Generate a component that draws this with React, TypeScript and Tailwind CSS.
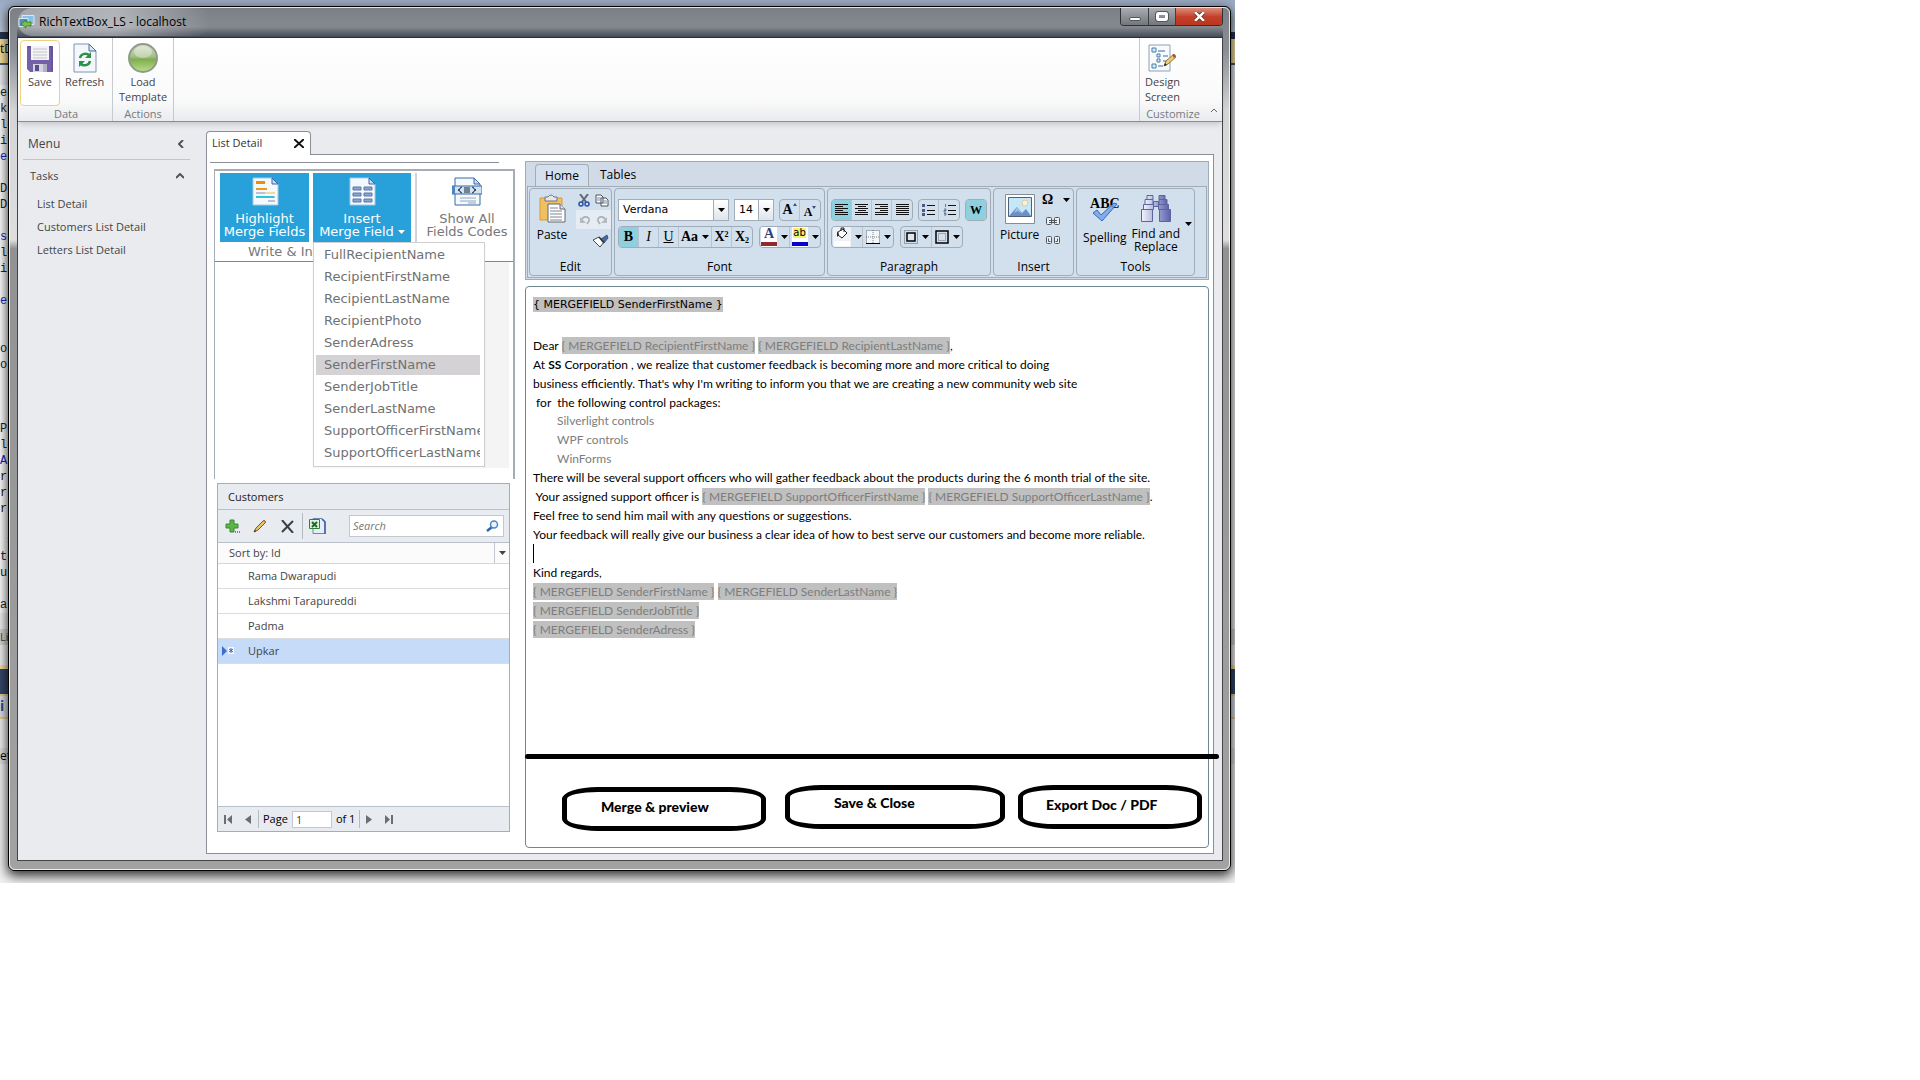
import type { ReactNode } from "react";
import clsx from "clsx";

const CODE_LINES = [
  "ea", "k", "lo", "in", "er", "", "De", "De", "", "s", "lo", "in", "", "er", "", "", "or", "or",
  "", "", "", "Po", "lo", "As", "r", "r", "r", "", " =", "te", "us", "", "ag",
];
const KEYWORD_LINES = [4, 9, 13, 23];

const TASKS = ["List Detail", "Customers List Detail", "Letters List Detail"];

const MERGE_FIELDS = [
  "FullRecipientName",
  "RecipientFirstName",
  "RecipientLastName",
  "RecipientPhoto",
  "SenderAdress",
  "SenderFirstName",
  "SenderJobTitle",
  "SenderLastName",
  "SupportOfficerFirstName",
  "SupportOfficerLastName",
];

const CUSTOMERS = ["Rama Dwarapudi", "Lakshmi Tarapureddi", "Padma", "Upkar"];

const Caret = ({ className = "" }: { className?: string }) => (
  <svg width="7" height="4" viewBox="0 0 7 4" className={clsx("shrink-0", className)}>
    <path d="M0 0h7L3.5 4z" fill="currentColor" />
  </svg>
);

const SaveIcon = () => (
  <svg width="26" height="27" viewBox="0 0 26 27">
    <path d="M0 1h26v26H3l-3-3z" fill="#7261a8" />
    <path d="M1 2h24v24" fill="none" stroke="#5a4a92" />
    <path d="M4 1h18v14H4z" fill="#f4f4f6" />
    <path d="M6 4h14M6 7h14M6 10h14M6 13h14" stroke="#c3c3cb" />
    <path d="M6 19h14v8H6z" fill="#d5d5de" />
    <path d="M8 20h4v6H8z" fill="#5b4c8e" />
    <path d="M16 19h4v8h-4z" fill="#b1b0c4" />
  </svg>
);

const RefreshIcon = () => (
  <svg width="24" height="30" viewBox="0 0 24 30">
    <path d="M1 1h15l7 7v21H1z" fill="#f3f7fc" stroke="#7f95b2" />
    <path d="M16 1v7h7z" fill="#d8e5f5" stroke="#4f6c9c" />
    <path d="M7 15c1-5 7-5 9-3M17 18c-1 5-7 5-9 3" fill="none" stroke="#2c9148" strokeWidth="2.500" />
    <path d="M18 9v6h-6zM6 24v-6h6z" fill="#2c9148" />
  </svg>
);

const GreenBall = () => (
  <svg width="32" height="32" viewBox="0 0 32 32">
    <defs>
      <linearGradient id="ball" x1="0" y1="0" x2="0" y2="1">
        <stop offset="0" stopColor="#d5e0cc" />
        <stop offset="0.45" stopColor="#a3bf86" />
        <stop offset="0.55" stopColor="#7fae50" />
        <stop offset="1" stopColor="#b8e08c" />
      </linearGradient>
    </defs>
    <circle cx="16" cy="16" r="14" fill="url(#ball)" stroke="#8f9b88" strokeWidth="2" />
    <ellipse cx="16" cy="10" rx="9" ry="6" fill="#ffffff" opacity="0.35" />
  </svg>
);

const DesignIcon = () => (
  <svg width="28" height="28" viewBox="0 0 28 28">
    <path d="M1 1h21v26H1z" fill="#f8fafc" stroke="#8fa0b8" />
    <path d="M4 4h4v4H4zM9 10h3v3H9zM9 15h3v3H9zM4 20h4v4H4z" fill="#d9ecf5" stroke="#477fae" />
    <path d="M10 7h7M15 12h5M15 17h3M10 22h5" stroke="#3c6aa5" />
    <path d="M16 22l2-5 8-7 2 3-8 7z" fill="#e8cf6c" stroke="#6c5c30" strokeWidth="0.8" />
    <path d="M24 11l2-1 2 2-2 2z" fill="#b84c3b" />
    <path d="M16 22l1-3 2 2z" fill="#222" />
  </svg>
);

const PageIcon = ({ kind }: { kind: "highlight" | "insert" | "codes" }) => (
  <svg width="30" height="29" viewBox="0 0 30 29">
    <path d="M3 1h19l6 6v21H3z" fill="#f4f9fd" stroke={kind === "codes" ? "#3d68a5" : "#a9c8e2"} />
    <path d="M22 1v6h6z" fill="#c9dcf0" stroke="#3d68a5" />
    {kind === "highlight" && (
      <>
        <path d="M6 4h9v3H6z" fill="#ed8b12" />
        <path d="M6 12h11" stroke="#ed9a1c" strokeWidth="2" />
        <path d="M6 16h9M16 20h9" stroke="#7d8db4" />
        <path d="M15 16h10" stroke="#f2b44c" />
        <path d="M6 20h18" stroke="#32c3dc" strokeWidth="2" />
        <path d="M18 24h7" stroke="#7d8db4" />
      </>
    )}
    {kind === "insert" && (
      <path
        d="M6 10h8v3H6zM17 10h8v3h-8zM6 16h8v3H6zM17 16h8v3h-8zM6 22h8v3H6zM17 22h8v3h-8z"
        fill="#8ea5cb"
        stroke="#5878aa"
      />
    )}
    {kind === "codes" && (
      <>
        <path d="M0 9h30v8H0z" fill="#cfe3f5" stroke="#3d68a5" />
        <path d="M0 9h3v8H0z" fill="#4c86c6" />
        <path d="M10 10q-2 0-2 2l-2 1 2 1q0 2 2 2M20 10q2 0 2 2l2 1-2 1q0 2-2 2M12 11h6M12 13h6M12 15h6" fill="none" stroke="#18202c" />
        <path d="M8 21h16M8 24h16M16 26h8" stroke="#93a8c8" />
      </>
    )}
  </svg>
);

const PasteIcon = () => (
  <svg width="27" height="29" viewBox="0 0 27 29">
    <path d="M1 4h22v22H1z" fill="#f0bf62" stroke="#d79b3c" />
    <path d="M6 3h3q3-4 6 0h3v4H6z" fill="#e5e7ea" stroke="#6f757d" />
    <path d="M9 10h12l5 5v13H9z" fill="#fff" stroke="#60666f" />
    <path d="M21 10v5h5" fill="#dde4ec" stroke="#60666f" />
    <path d="M11 14h8M11 17h12M11 20h12M11 23h12M11 26h12" stroke="#7e858e" />
  </svg>
);

const CutIcon = () => (
  <svg width="12" height="13" viewBox="0 0 12 13" fill="none">
    <path d="M2 0l6 8M10 0L4 8" stroke="#5f6670" strokeWidth="2" />
    <circle cx="3" cy="10" r="2" stroke="#2a51a8" strokeWidth="1.5" />
    <circle cx="9" cy="10" r="2" stroke="#2a51a8" strokeWidth="1.5" />
  </svg>
);

const CopyIcon = () => (
  <svg width="14" height="13" viewBox="0 0 14 13">
    <path d="M1 1h5l2 2v6H1zM6 4h5l2 2v6H6z" fill="#fff" stroke="#4d5560" />
    <path d="M2 4h4M2 6h4M8 7h4M8 9h4" stroke="#7b8ba5" />
  </svg>
);

const UndoIcon = ({ flip = false }: { flip?: boolean }) => (
  <svg width="12" height="10" viewBox="0 0 12 10" className={clsx(flip && "-scale-x-100")}>
    <path d="M2 6c2-6 9-5 8 0l-2 3" fill="none" stroke="#a9afb7" strokeWidth="1.6" />
    <path d="M1 2v6h6z" fill="#b5bac1" />
  </svg>
);

const BrushIcon = () => (
  <svg width="17" height="14" viewBox="0 0 17 14">
    <path d="M9 5l6-4 1 3-4 5z" fill="#4c66a0" stroke="#2f4270" strokeWidth="0.8" />
    <path d="M1 6l6-3 5 5-4 5z" fill="#fff" stroke="#444b55" />
    <path d="M7 3l5 6" stroke="#333" strokeWidth="1.5" />
  </svg>
);

const AlignIcon = ({ kind }: { kind: "left" | "center" | "right" | "justify" }) => {
  const short = { left: "M0 3h8M0 7h8", center: "M3 3h8M3 7h8", right: "M5 3h8M5 7h8", justify: "M0 3h13M0 7h13" };
  return (
    <svg width="13" height="12" viewBox="0 0 13 12" stroke="#111" fill="none">
      <path d="M0 1h13M0 5h13M0 9h13M0 11h13" transform="translate(0 -.5)" />
      <path d={short[kind]} transform="translate(0 -.5)" />
    </svg>
  );
};

const ListIcon = ({ numbered = false }: { numbered?: boolean }) => (
  <svg width="13" height="12" viewBox="0 0 13 12">
    <path d="M5 1.5h8M5 6.500h8M5 10.500h8" stroke="#111" />
    {numbered ? (
      <path d="M2.500 0v3M1 5h2v1.500H1V8h2M1 9.500h2V11H1" fill="none" stroke="#4a5d80" strokeWidth="0.8" />
    ) : (
      <path d="M0 0h3v3H0zM0 5h3v3H0zM0 9h3v3H0z" fill="#4a5d80" />
    )}
  </svg>
);

const BucketIcon = () => (
  <svg width="18" height="20" viewBox="0 0 18 20">
    <path d="M0 0h18v20H0z" fill="#eef2f7" />
    <path d="M5 5l5-3 4 4-5 5-4-3z" fill="#fff" stroke="#222" />
    <path d="M8 4V1h3v4" fill="none" stroke="#222" />
    <path d="M4 4v6l2-2z" fill="#222" />
    <path d="M1 14h16v5H1z" fill="#fff" />
  </svg>
);

const BorderIcon = ({ kind }: { kind: "bottom" | "inner" | "outer" }) => (
  <svg width="14" height="14" viewBox="0 0 14 14" fill="none">
    {kind === "bottom" && (
      <>
        <path d="M0 0h14v14H0z" fill="#f4f7fa" />
        <path d="M7 0v13M0 7h13" stroke="#7b848f" strokeDasharray="1 1" />
      </>
    )}
    {kind !== "outer" && <path d="M.5.5h13v13H.5z" stroke="#56606c" strokeDasharray="1 1" />}
    {kind === "bottom" && <path d="M0 13.500h14" stroke="#000" />}
    {kind === "inner" && <path d="M3 3h8v8H3z" fill="#dfe6ee" stroke="#000" strokeWidth="1.500" />}
    {kind === "outer" && (
      <>
        <path d="M1 1h12v12H1z" stroke="#000" strokeWidth="1.500" />
        <path d="M3.500 3.500h7v7h-7z" stroke="#68717d" strokeDasharray="1 1" />
      </>
    )}
  </svg>
);

const PictureIcon = () => (
  <svg width="30" height="30" viewBox="0 0 30 30">
    <path d="M.5.5h29v29H.5z" fill="#fff" stroke="#868d96" />
    <path d="M3.500 3.500h23v19h-23z" fill="#c5e8f8" stroke="#4f5f74" />
    <circle cx="20" cy="9" r="3" fill="#fdf0d0" stroke="#e9c79b" />
    <path d="M4 22l8-9 5 6 4-4 5 7z" fill="#6a8fc9" />
    <path d="M12 13l-3 6 4-2 4 3z" fill="#a5c0e6" />
  </svg>
);

const LinkIcon = ({ broken = false }: { broken?: boolean }) => (
  <svg width="14" height="8" viewBox="0 0 14 8" fill="none" stroke="#4f565f">
    <rect x="0.500" y="0.500" width="5" height="7" rx="1" fill="#eef1f4" />
    <rect x="8.500" y="0.500" width="5" height="7" rx="1" fill="#eef1f4" />
    {broken ? <path d="M2.500 2.500v3h2M11.500 2.500v3h-2" /> : <path d="M3 3.500h8M3 5.500h8" />}
  </svg>
);

const SpellingIcon = () => (
  <span className="flex flex-col items-center">
    <span className="font-['Liberation_Serif'] text-sm leading-3 font-bold">ABC</span>
    <svg width="28" height="20" viewBox="0 0 28 20" className="-mt-2">
      <path d="M2 11l4-3 4 5L23 1l3 1-15 17z" fill="#76a5ea" fillOpacity="0.85" stroke="#3767bd" />
    </svg>
  </span>
);

const BinocularsIcon = () => (
  <svg width="30" height="27" viewBox="0 0 30 27">
    <defs>
      <linearGradient id="lens" x1="0" x2="1">
        <stop offset="0" stopColor="#f2f4fc" />
        <stop offset="1" stopColor="#5a62ae" />
      </linearGradient>
    </defs>
    <g fill="url(#lens)" stroke="#5d649f">
      <path d="M6 .5h6v4H6zM18 .5h6v4h-6zM4 4.500h8v5H4zM18 4.500h8v5h-8z" />
      <path d="M2.500 9.500h10v5h-10zM17.500 9.500h10v5h-10zM12.500 6.500h5v5h-5z" />
      <path d="M.5 14.500h11v12H.5zM18.500 14.500h11v12h-11z" />
    </g>
  </svg>
);

const TitleBar = () => (
  <header className="flex h-[29px] items-start justify-between bg-linear-to-b from-[#7b8087] from-0% via-[#85898f] via-65% to-[#454c58] pl-px">
    <h1 className="flex h-7 items-center gap-1 rounded-full bg-linear-to-r from-white/30 via-white/40 to-transparent pr-6 font-['Open_Sans'] text-xs text-black">
      <svg width="17" height="14" viewBox="0 0 17 14">
        <path d="M4 .5h12v9H4z" fill="#84c2ea" stroke="#dfe6ee" />
        <path d="M1 3.500h9v8H1z" fill="#4e8fc8" stroke="#dfe6ee" />
        <path d="M13 11H8v2L3 9l5-4v2h5z" fill="#7ac143" stroke="#2c7a22" strokeWidth="0.800" />
      </svg>
      RichTextBox_LS - localhost
    </h1>
    <div className="flex h-[18px] overflow-hidden rounded-b border border-t-0 border-[#2d3238] text-white">
      <button aria-label="Minimize" className="flex w-[28px] items-end justify-center border-r border-[#3c4147] bg-linear-to-b from-[#a9adb2] to-[#73777d] pb-1">
        <span className="h-1 w-3 rounded-xs border border-[#555] bg-white" />
      </button>
      <button aria-label="Maximize" className="flex w-[27px] items-center justify-center border-r border-[#3c4147] bg-linear-to-b from-[#a9adb2] to-[#73777d]">
        <span className="h-[9px] w-3 rounded-xs border-3 border-white outline outline-[#555]" />
      </button>
      <button aria-label="Close" className="flex w-[46px] items-center justify-center bg-linear-to-b from-[#d98d7c] via-[#c4402a] to-[#b8351f]">
        <svg width="11" height="9" viewBox="0 0 11 9">
          <path d="M1 0l9 9M10 0L1 9" stroke="#5c1d12" strokeWidth="4" />
          <path d="M1 0l9 9M10 0L1 9" stroke="#fff" strokeWidth="2.500" />
        </svg>
      </button>
    </div>
  </header>
);

const AppButton = ({ icon, label, active = false }: { icon: ReactNode; label: string; active?: boolean }) => (
  <button
    className={clsx(
      "flex h-[66px] flex-col items-center rounded-sm border px-1 pt-px text-[11px] leading-[15px] text-[#444]",
      active ? "w-10 border-[#ecd27c] bg-white" : "border-transparent",
    )}
  >
    <span className="flex h-8 items-center">{icon}</span>
    <span className="w-min">{label}</span>
  </button>
);

const AppGroup = ({ title, children, className }: { title: string; children: ReactNode; className?: string }) => (
  <div className={clsx("flex flex-col pt-[2px]", className)}>
    <div className="flex">{children}</div>
    <div className="text-center text-[11px] leading-4 text-[#77797d]">{title}</div>
  </div>
);

const AppRibbon = () => (
  <div className="flex h-[84px] justify-between border-b border-[#8b8e93] bg-linear-to-b from-white from-0% via-[#fafafa] via-75% to-[#e9ebef] shadow-md">
    <div className="flex">
      <AppGroup title="Data" className="w-[95px] border-r border-[#c6c9ce] pl-[2px]">
        <AppButton icon={<SaveIcon />} label="Save" active />
        <AppButton icon={<RefreshIcon />} label="Refresh" />
      </AppGroup>
      <AppGroup title="Actions" className="w-[61px] items-center border-r border-[#c6c9ce]">
        <AppButton icon={<GreenBall />} label="Load Template" />
      </AppGroup>
    </div>
    <div className="flex w-[83px] items-end justify-between border-l border-[#c6c9ce] pr-1">
      <AppGroup title="Customize" className="h-full w-[66px]">
        <AppButton icon={<DesignIcon />} label="Design Screen" />
      </AppGroup>
      <button aria-label="Collapse ribbon" className="mb-2">
        <svg width="8" height="5" viewBox="0 0 8 5" fill="none" stroke="#666">
          <path d="M1 4l3-3 3 3" />
        </svg>
      </button>
    </div>
  </div>
);

const Sidebar = () => (
  <nav className="w-[188px] shrink-0 pt-[6px] text-[#444]">
    <div className="mr-4 ml-[5px] flex h-8 items-center justify-between border-b border-[#bcc6d4] pr-[6px] pl-[5px] text-xs">
      Menu
      <svg width="6" height="8" viewBox="0 0 6 8" fill="none" stroke="#555" strokeWidth="2">
        <path d="M5 0L1 4l4 4" />
      </svg>
    </div>
    <div className="mr-4 ml-[12px] flex h-8 items-center justify-between pr-[6px] text-[11px]">
      Tasks
      <svg width="8" height="6" viewBox="0 0 8 6" fill="none" stroke="#555" strokeWidth="2">
        <path d="M0 5l4-4 4 4" />
      </svg>
    </div>
    <ul className="pl-[19px] text-[11px]">
      {TASKS.map((task) => (
        <li key={task} className="h-[23px] leading-[23px]">
          <a href="#">{task}</a>
        </li>
      ))}
    </ul>
  </nav>
);

const MergePanel = () => (
  <section className="flex h-[310px] flex-col border-t-2 border-r-2 border-l border-[#a4adb8] font-['DejaVu_Sans'] text-[13px]">
    <div className="flex gap-1 pt-[2px] pl-[5px] leading-[13px]">
      <button className="flex h-[69px] w-[89px] flex-col items-center bg-[#28a0da] pt-1 text-white">
        <PageIcon kind="highlight" />
        <span className="mt-[6px] whitespace-nowrap">
          Highlight
          <br />
          Merge Fields
        </span>
      </button>
      <div className="relative">
        <button className="flex h-[69px] w-[98px] flex-col items-center bg-[#28a0da] pt-1 text-white">
          <PageIcon kind="insert" />
          <span className="mt-[6px]">Insert</span>
          <span className="flex items-center gap-1 whitespace-nowrap">
            Merge Field <Caret />
          </span>
        </button>
        <ul className="absolute top-[69px] left-0 z-10 flex w-[172px] flex-col gap-[2px] border border-[#cfcfd1] bg-white px-[2px] pt-[2px] pb-[3px] text-[#707173] shadow-xs">
          {MERGE_FIELDS.map((field) => (
            <li
              key={field}
              className={clsx(
                "mr-[2px] h-5 overflow-hidden pl-2 leading-5",
                field === "SenderFirstName" && "bg-[#d4d2d4]",
              )}
            >
              {field}
            </li>
          ))}
        </ul>
      </div>
      <button className="flex h-[69px] flex-1 flex-col items-center border-l-2 border-[#cfd2d6] pt-1 pl-1 text-[#77787a]">
        <PageIcon kind="codes" />
        <span className="mt-[6px] whitespace-nowrap">
          Show All
          <br />
          Fields Codes
        </span>
      </button>
    </div>
    <div className="h-5 border-b border-[#3f9cc6] pl-[33px] leading-[19px] text-[#77787a]">Write &amp; In</div>
    <div className="mx-1 h-[206px] bg-linear-to-r from-white from-91% to-[#f4f4f4] to-91%" />
  </section>
);

const CustomersPanel = () => (
  <section className="mr-[5px] ml-[3px] border border-[#a4adb8] bg-white text-[11px] text-[#444]">
    <h2 className="h-[26px] border-b border-[#b9c0ca] bg-[#e8ebf0] pl-[10px] leading-[26px] text-[#222]">Customers</h2>
    <div className="flex h-[33px] items-center border-b border-[#b9c0ca] bg-[#e8ebf0] pr-[5px] pl-[7px]">
      <button aria-label="Add" className="mr-3">
        <svg width="16" height="14" viewBox="0 0 16 14">
          <path d="M5 1h4v4h4v4H9v4H5V9H1V5h4z" fill="#5cb548" stroke="#3a8a30" />
          <path d="M10 13h1M12 13h1M14 13h1" stroke="#222" />
        </svg>
      </button>
      <button aria-label="Edit" className="mr-[14px]">
        <svg width="14" height="14" viewBox="0 0 14 14">
          <path d="M1 13l2-4 8-8 2 2-8 8z" fill="#e8c266" stroke="#7a5a28" />
          <path d="M10 2l1-1 2 2-1 1z" fill="#d9776c" />
          <path d="M1 13l1-2 1 1z" fill="#111" />
        </svg>
      </button>
      <button aria-label="Delete" className="mr-2">
        <svg width="13" height="13" viewBox="0 0 13 13" fill="none" stroke="#3c3f44" strokeWidth="2">
          <path d="M1 0l11 13M12 1L1 12" />
        </svg>
      </button>
      <span className="mr-[6px] h-[26px] w-px bg-[#b4bac4]" />
      <button aria-label="Export to Excel">
        <svg width="17" height="16" viewBox="0 0 17 16">
          <path d="M4 .5h9l3 3v12H4z" fill="#e5eef9" stroke="#6a87bc" />
          <path d="M13 1l3 3v12" fill="none" stroke="#3d5f9f" strokeWidth="1.500" />
          <path d="M.5 1.500h10v9H.5z" fill="#ddf0da" stroke="#2f7f36" />
          <path d="M3 4l5 5M8 4L3 9" stroke="#1d6a28" strokeWidth="2" />
        </svg>
      </button>
      <div className="ml-auto flex h-[22px] w-[155px] items-center border border-[#c3c8d0] bg-white pr-1">
        <input aria-label="Search" placeholder="Search" className="w-full pl-[3px] italic outline-none placeholder:text-[#777]" />
        <svg width="13" height="12" viewBox="0 0 13 12" fill="none" className="shrink-0">
          <path d="M6 7l-5 4" stroke="#2f62ad" strokeWidth="2.500" />
          <circle cx="8" cy="4.500" r="3.500" fill="#eaf4fd" stroke="#4a86cc" strokeWidth="1.500" />
        </svg>
      </div>
    </div>
    <div className="flex h-[21px] items-center border-b border-[#d4d7dc] bg-[#fbfbfb] pl-[11px]">
      Sort by: Id
      <button aria-label="Sort order" className="ml-auto flex h-full w-[15px] items-center justify-center border-l border-[#c3c8d0]">
        <Caret />
      </button>
    </div>
    <ul className="min-h-[242px]">
      {CUSTOMERS.map((name) => (
        <li
          key={name}
          className={clsx(
            "flex h-[25px] items-center border-b border-[#d9dce0] pl-[4px]",
            name === "Upkar" && "bg-[#c5dbf7]",
          )}
        >
          <span className="w-[26px]">
            {name === "Upkar" && (
              <svg width="12" height="10" viewBox="0 0 12 10">
                <path d="M0 0l5 5-5 5z" fill="#3a6fd0" />
                <path d="M6 1h6v7H6z" fill="#f4f8fe" />
                <path d="M9 2v5M7 3l4 3M11 3L7 6" stroke="#2a4d90" strokeWidth="0.800" />
              </svg>
            )}
          </span>
          {name}
        </li>
      ))}
    </ul>
    <div className="flex h-[25px] items-center border-t border-[#b9c0ca] bg-[#e8ebf0] pl-[6px] text-[#6b6f74]">
      <button aria-label="First page" className="mr-3">
        <svg width="9" height="9" viewBox="0 0 9 9" fill="currentColor">
          <path d="M0 0h2v9H0zM8 0v9L3 4.500z" />
        </svg>
      </button>
      <button aria-label="Previous page" className="mr-[7px]">
        <svg width="6" height="9" viewBox="0 0 6 9" fill="currentColor">
          <path d="M6 0v9L0 4.500z" />
        </svg>
      </button>
      <label className="flex h-[18px] items-center gap-1 border-l border-[#b4bac4] pl-1 text-black">
        Page
        <input defaultValue="1" className="h-[17px] w-10 border border-[#c3c8d0] bg-white pl-[3px] text-[#444]" />
      </label>
      <span className="flex h-[18px] items-center border-r border-[#b4bac4] px-1 text-black">of 1</span>
      <button aria-label="Next page" className="mr-3 ml-[6px]">
        <svg width="6" height="9" viewBox="0 0 6 9" fill="currentColor">
          <path d="M0 0v9l6-4.500z" />
        </svg>
      </button>
      <button aria-label="Last page">
        <svg width="9" height="9" viewBox="0 0 9 9" fill="currentColor">
          <path d="M1 0v9l5-4.500zM7 0h2v9H7z" />
        </svg>
      </button>
    </div>
  </section>
);

const RibbonGroup = ({ title, className, children }: { title: string; className: string; children: ReactNode }) => (
  <div className={clsx("flex flex-col rounded-sm border border-[#a0adb9]", className)}>
    <div className="flex-1 pt-[5px]">{children}</div>
    <div className="h-[17px] text-center leading-[18px]">{title}</div>
  </div>
);

const ToolGroup = ({ children }: { children: ReactNode }) => (
  <div className="flex h-[22px] shrink-0 items-stretch divide-x divide-[#b7c3cf] overflow-hidden rounded-sm border border-[#a0adb9]">
    {children}
  </div>
);

const Tool = ({ label, active = false, width = "w-[20px]", children }: { label: string; active?: boolean; width?: string; children: ReactNode }) => (
  <button
    aria-label={label}
    className={clsx(
      "flex items-center justify-center gap-1 font-['Liberation_Serif'] text-sm leading-none font-bold",
      width,
      active && "bg-[#8fd0df]",
    )}
  >
    {children}
  </button>
);

const Picker = ({ label, value, className }: { label: string; value: string; className: string }) => (
  <div className={clsx("flex h-[22px] border border-[#a0adb9] bg-white", className)}>
    <select aria-label={label} className="min-w-0 flex-1 appearance-none pl-1 font-['DejaVu_Sans'] text-[11px] outline-none">
      <option>{value}</option>
    </select>
    <span className="flex w-[15px] items-center justify-center border-l border-[#a0adb9] bg-linear-to-b from-white to-[#dfe5ec]">
      <Caret />
    </span>
  </div>
);

const EditorRibbon = () => (
  <div className="flex h-[119px] flex-col border border-[#a0adb9] bg-[#d1dbe7] p-px text-xs text-black">
    <div className="flex h-[23px] items-end pl-2">
      <button className="-mb-px h-[23px] w-[54px] rounded-t border border-b-0 border-[#a0adb9] bg-[#d4e0ed]">Home</button>
      <button className="h-[23px] px-[11px]">Tables</button>
    </div>
    <div className="flex flex-1 gap-[2px] border border-[#a0adb9] bg-[#d2dfec] p-px">
      <RibbonGroup title="Edit" className="w-[83px]">
        <div className="flex gap-2 pl-[6px]">
          <button className="flex w-8 flex-col items-center">
            <PasteIcon />
            <span className="mt-1 leading-4">Paste</span>
          </button>
          <div className="flex flex-1 flex-col gap-[3px]">
            <div className="flex justify-around">
              <button aria-label="Cut"><CutIcon /></button>
              <button aria-label="Copy"><CopyIcon /></button>
            </div>
            <div className="flex h-[19px] items-center justify-around bg-[#e6ecf3]">
              <button aria-label="Undo"><UndoIcon /></button>
              <button aria-label="Redo"><UndoIcon flip /></button>
            </div>
            <button aria-label="Format painter" className="mt-[2px] mr-[2px] self-end"><BrushIcon /></button>
          </div>
        </div>
      </RibbonGroup>
      <RibbonGroup title="Font" className="w-[211px]">
        <div className="flex flex-col gap-[5px] px-[3px] pt-[5px]">
          <div className="flex justify-between">
            <Picker label="Font family" value="Verdana" className="w-[111px]" />
            <Picker label="Font size" value="14" className="w-10" />
            <ToolGroup>
              <Tool label="Grow font">
                <span className="flex items-start">
                  A
                  <svg width="4" height="3" viewBox="0 0 4 3"><path d="M0 3l2-3 2 3z" fill="#35507c" /></svg>
                </span>
              </Tool>
              <Tool label="Shrink font">
                <span className="flex items-start pt-1 text-xs leading-none">
                  A
                  <svg width="4" height="3" viewBox="0 0 4 3"><path d="M0 0h4L2 3z" fill="#35507c" /></svg>
                </span>
              </Tool>
            </ToolGroup>
          </div>
          <div className="flex justify-between">
            <ToolGroup>
              <Tool label="Bold" active>B</Tool>
              <Tool label="Italic"><i className="font-normal">I</i></Tool>
              <Tool label="Underline"><u className="font-normal">U</u></Tool>
              <Tool label="Change case" width="w-[33px]">Aa<Caret /></Tool>
              <Tool label="Superscript"><span>X<sup className="text-[8px]">2</sup></span></Tool>
              <Tool label="Subscript"><span>X<sub className="text-[8px]">2</sub></span></Tool>
            </ToolGroup>
            <ToolGroup>
              <Tool label="Font color" width="w-[30px]">
                <span className="flex h-full w-4 flex-col items-center justify-between bg-white pb-px text-[#2e3f80]">
                  A<span className="h-1 w-full bg-[#93292f]" />
                </span>
                <Caret />
              </Tool>
              <Tool label="Highlight color" width="w-[30px]">
                <span className="flex h-full w-4 flex-col items-center justify-between bg-white pt-px pb-px">
                  <span className="flex items-center bg-[#f7f26a] font-['DejaVu_Sans'] text-[10px] font-normal">ab</span>
                  <span className="h-1 w-full bg-[#0000d0]" />
                </span>
                <Caret />
              </Tool>
            </ToolGroup>
          </div>
        </div>
      </RibbonGroup>
      <RibbonGroup title="Paragraph" className="w-[164px]">
        <div className="flex flex-col gap-[5px] px-[3px] pt-[5px]">
          <div className="flex justify-between">
            <ToolGroup>
              <Tool label="Align left" active><AlignIcon kind="left" /></Tool>
              <Tool label="Center"><AlignIcon kind="center" /></Tool>
              <Tool label="Align right"><AlignIcon kind="right" /></Tool>
              <Tool label="Justify"><AlignIcon kind="justify" /></Tool>
            </ToolGroup>
            <ToolGroup>
              <Tool label="Bullets"><ListIcon /></Tool>
              <Tool label="Numbering"><ListIcon numbered /></Tool>
            </ToolGroup>
            <ToolGroup>
              <Tool label="Show marks" active><span className="text-xs leading-none">W</span></Tool>
            </ToolGroup>
          </div>
          <div className="flex gap-[6px]">
            <ToolGroup>
              <Tool label="Shading" width="w-[31px]"><BucketIcon /><Caret /></Tool>
              <Tool label="Borders" width="w-[30px]"><BorderIcon kind="bottom" /><Caret /></Tool>
            </ToolGroup>
            <ToolGroup>
              <Tool label="Inside border" width="w-[31px]"><BorderIcon kind="inner" /><Caret /></Tool>
              <Tool label="Outside border" width="w-[30px]"><BorderIcon kind="outer" /><Caret /></Tool>
            </ToolGroup>
          </div>
        </div>
      </RibbonGroup>
      <RibbonGroup title="Insert" className="w-[81px]">
        <div className="flex justify-between pr-[3px] pl-[6px]">
          <button className="flex flex-col items-center">
            <PictureIcon />
            <span className="mt-[3px] leading-4">Picture</span>
          </button>
          <div className="flex w-7 flex-col gap-[11px]">
            <button aria-label="Symbol" className="flex items-center justify-between font-['Liberation_Serif'] text-sm leading-3 font-bold">
              Ω <Caret />
            </button>
            <button aria-label="Hyperlink" className="ml-1"><LinkIcon /></button>
            <button aria-label="Remove hyperlink" className="ml-1"><LinkIcon broken /></button>
          </div>
        </div>
      </RibbonGroup>
      <RibbonGroup title="Tools" className="w-[119px]">
        <div className="flex justify-between pr-[2px] pl-[6px] leading-[13px]">
          <button className="flex flex-col items-center pt-1">
            <SpellingIcon />
            <span className="mt-[9px]">Spelling</span>
          </button>
          <button className="flex w-12 flex-col items-center pt-px">
            <BinocularsIcon />
            <span className="mt-[5px] whitespace-nowrap">Find and</span>
            <span>Replace</span>
          </button>
          <button aria-label="More tools" className="self-center"><Caret /></button>
        </div>
      </RibbonGroup>
    </div>
  </div>
);

const Field = ({ name, dark = false }: { name: string; dark?: boolean }) => (
  <span className={clsx("bg-[#c0c0c0] py-px", dark ? "font-['DejaVu_Sans'] text-[11px] text-black" : "text-[#7d7d7d]")}>
    {`{ MERGEFIELD ${name} }`}
  </span>
);

const Letter = () => (
  <div className="min-h-[467px] pt-[7px] pl-[7px] font-[Lato] text-xs leading-[19px] whitespace-pre text-black">
    <p className="mb-[22px]"><Field name="SenderFirstName" dark /></p>
    <p>Dear <Field name="RecipientFirstName" /> <Field name="RecipientLastName" />,</p>
    <p>At <b>SS</b> Corporation , we realize that customer feedback is becoming more and more critical to doing</p>
    <p>business efficiently. That's why I'm writing to inform you that we are creating a new community web site</p>
    <p> for  the following control packages:</p>
    <ul className="-mt-px pl-6 text-[#7d7d7d]">
      <li>Silverlight controls</li>
      <li>WPF controls</li>
      <li>WinForms</li>
    </ul>
    <p>There will be several support officers who will gather feedback about the products during the 6 month trial of the site.</p>
    <p> Your assigned support officer is <Field name="SupportOfficerFirstName" /> <Field name="SupportOfficerLastName" />.</p>
    <p>Feel free to send him mail with any questions or suggestions.</p>
    <p>Your feedback will really give our business a clear idea of how to best serve our customers and become more reliable.</p>
    <p className="h-[19px] border-l border-black" />
    <p>Kind regards,</p>
    <p><Field name="SenderFirstName" /> <Field name="SenderLastName" /></p>
    <p><Field name="SenderJobTitle" /></p>
    <p><Field name="SenderAdress" /></p>
  </div>
);

const ActionButton = ({ label, className }: { label: string; className: string }) => (
  <button
    className={clsx(
      "h-11 rounded-[36px/12px] border-5 border-black bg-white text-left font-[Lato] text-sm leading-4 font-black text-black",
      className,
    )}
  >
    {label}
  </button>
);

const Editor = () => (
  <div className="min-w-0 flex-1 pt-[6px] pr-1">
    <EditorRibbon />
    <div className="mt-[6px] rounded-sm border border-[#6f8791] bg-white">
      <Letter />
      <div className="-mr-[11px] -ml-px h-[5px] rounded-full bg-black" />
      <div className="flex min-h-[88px] items-start pt-[26px] pr-[6px] pl-9">
        <ActionButton label="Merge & preview" className="mt-[2px] w-[204px] pb-1 pl-[34px]" />
        <ActionButton label="Save & Close" className="ml-[19px] w-[220px] pb-2 pl-[44px]" />
        <ActionButton label="Export Doc / PDF" className="ml-auto w-[184px] pb-1 pl-[23px]" />
      </div>
    </div>
  </div>
);

const Backdrop = () => (
  <div aria-hidden="true" className="absolute inset-0 bg-[#f2f2f2]">
    <div className="h-8 bg-linear-to-b from-[#9babc4] to-[#c0cbdb]" />
    <div className="h-[7px] bg-[#25344f]" />
    <div className="h-6 bg-[#fbe3a0] text-xs leading-5 text-black">tD</div>
    <div className="h-[22px] border-t-2 border-[#4a5a75] bg-[#eef0f4]" />
    <div className="w-[9px] bg-white font-['Liberation_Mono'] text-xs leading-4">
      {CODE_LINES.map((line, i) => (
        <div key={i} className={clsx("h-4 whitespace-pre", KEYWORD_LINES.includes(i) ? "text-[#1a1ad0]" : "text-[#222]")}>
          {line}
        </div>
      ))}
    </div>
    <div className="mt-4 h-4 bg-[#d8d8d8] text-[11px] leading-4 text-[#444]">Li</div>
    <div className="mt-5 h-1 bg-[#fbe3a0]" />
    <div className="h-[25px] bg-[#35486b]" />
    <div className="h-[25px] border-y-2 border-[#f0cf86] bg-[#dfe4ea] text-sm leading-5 font-bold text-[#2a4d90]">i</div>
    <div className="mt-[29px] h-4 bg-[#e4e4e4] text-xs leading-4 text-black">et</div>
  </div>
);

const App = () => {
  return (
    <div className="min-h-screen bg-white font-['Open_Sans',sans-serif]">
      <div className="relative w-full max-w-[1235px] overflow-hidden pt-[6px] pr-1 pb-3 pl-2">
        <Backdrop />
        <div className="relative rounded-md border border-black bg-[linear-gradient(#7b8087_0%,#8a8f96_5%,#d4d5d6_12%,#dededf_27%,#929292_28%,#a2a2a2_100%)] shadow-[0_4px_12px_1px_rgba(0,0,0,0.8)]">
          <div className="rounded-md border border-white/80 pr-[6px] pb-2 pl-[7px]">
            <TitleBar />
            <div className="border border-t-[#2b2f36] border-r-[#444] border-b-[#444] border-l-[#444] bg-[#eaebef]">
              <AppRibbon />
              <div className="flex">
                <Sidebar />
                <main className="min-w-0 flex-1 pt-[9px] pr-2 pb-[6px]">
                  <div className="relative z-10 -mb-px flex h-6 w-[105px] items-center justify-between rounded-t border border-b-0 border-[#8a8f98] bg-white pr-[6px] pl-[5px] text-[11px] text-[#333]">
                    List Detail
                    <button aria-label="Close tab">
                      <svg width="10" height="9" viewBox="0 0 10 9" stroke="#111" strokeWidth="2">
                        <path d="M0 0l10 9M10 0L0 9" />
                      </svg>
                    </button>
                  </div>
                  <div className="flex border border-[#8a8f98] bg-white pb-[5px]">
                    <div className="flex w-[318px] shrink-0 flex-col gap-1 pr-[10px] pl-[7px]">
                      <div className="mt-[7px] mr-4 mb-[2px] -ml-[4px] h-px bg-[#8a8f98]" />
                      <MergePanel />
                      <CustomersPanel />
                    </div>
                    <Editor />
                  </div>
                </main>
              </div>
            </div>
          </div>
        </div>
      </div>
    </div>
  );
};

export default App;
